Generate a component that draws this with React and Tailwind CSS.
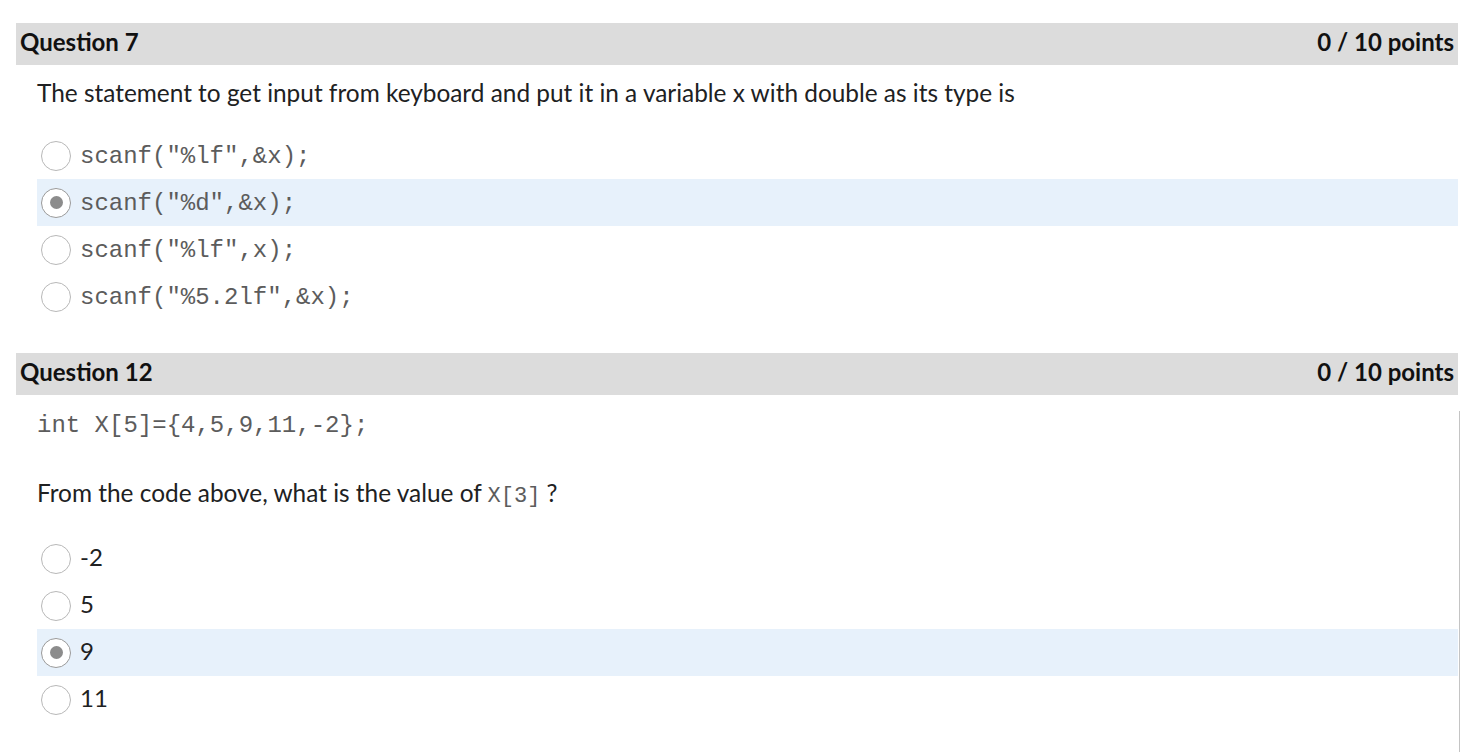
const q7Options = [
  { text: 'scanf("%lf",&x);', code: true },
  { text: 'scanf("%d",&x);', code: true, selected: true },
  { text: 'scanf("%lf",x);', code: true },
  { text: 'scanf("%5.2lf",&x);', code: true },
];

const q12Options = [
  { text: '-2' },
  { text: '5' },
  { text: '9', selected: true },
  { text: '11' },
];

function Radio({ selected }) {
  return (
    <span
      className={`w-[30px] h-[30px] shrink-0 rounded-full border bg-white flex items-center justify-center ${selected ? 'border-[#9a9a9a]' : 'border-[#b8b8b8]'}`}
    >
      {selected && <span className="w-[13px] h-[13px] rounded-full bg-[#8c8c8c]" />}
    </span>
  );
}

function Option({ text, code, selected }) {
  return (
    <div
      className={`h-[47px] flex items-center gap-[9px] pl-[4px] ${selected ? 'bg-[#e7f1fb]' : ''}`}
    >
      <Radio selected={selected} />
      <span
        className={
          code
            ? "font-['Liberation_Mono',monospace] text-[24px] text-[#5c5c5c] mt-[3px]"
            : "text-[24px] text-[#202122] -mt-[4px]"
        }
      >
        {text}
      </span>
    </div>
  );
}

function Header({ title }) {
  return (
    <div className="h-[42px] bg-[#dcdcdc] flex items-center justify-between px-[4px] pb-[5px] font-bold text-[24px] text-[#111]">
      <span>{title}</span>
      <span>0 / 10 points</span>
    </div>
  );
}

export default function App() {
  return (
    <div className="min-h-screen bg-white font-['Lato',sans-serif] text-[#202122] pt-[23px] pl-[16px] w-[1458px]">
      <Header title="Question 7" />
      <div className="pl-[21px]">
        <p className="mt-[13px] text-[24.4px] leading-[30px]">
          The statement to get input from keyboard and put it in a variable x with double as its type is
        </p>
        <div className="mt-[24px]">
          {q7Options.map((o, i) => (
            <Option key={i} {...o} />
          ))}
        </div>
      </div>

      <div className="mt-[33px]">
        <Header title="Question 12" />
      </div>
      <div className="pl-[21px] w-[1444px] border-r border-[#c4c4c4] mt-[17px] pb-[40px]">
        <p className="-mt-[1px] font-['Liberation_Mono',monospace] text-[24px] leading-[30px] text-[#5c5c5c]">
          int X[5]={'{'}4,5,9,11,-2{'}'};
        </p>
        <p className="mt-[37px] text-[24.4px] leading-[30px]">
          From the code above, what is the value of{' '}
          <span className="font-['Liberation_Mono',monospace] text-[22px] text-[#5c5c5c]">X[3]</span> ?
        </p>
        <div className="mt-[23px] mr-[1px]">
          {q12Options.map((o, i) => (
            <Option key={i} {...o} />
          ))}
        </div>
      </div>
    </div>
  );
}
